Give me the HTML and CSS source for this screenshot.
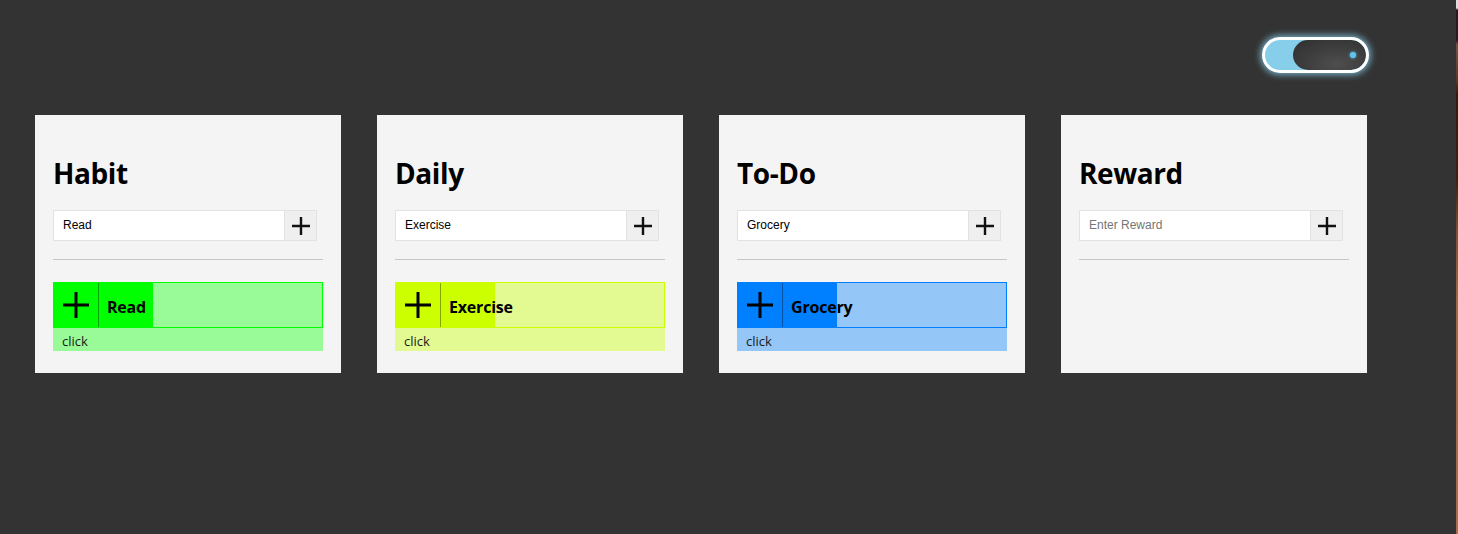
FILE: index.html
```html
<!DOCTYPE html>
<html lang="en">
<head>
<meta charset="utf-8">
<title>Habits</title>
<link rel="stylesheet" href="styles.css">
</head>
<body>
<div class="page">
  <header class="topbar">
    <div class="toggle">
      <div class="knob"><span class="dot"></span></div>
    </div>
  </header>
  <main class="board">
    <section class="card">
      <h2 class="card-title">Habit</h2>
      <div class="add-row">
        <input class="add-input" type="text" value="Read" placeholder="Enter Habit">
        <button class="add-btn"><svg width="20" height="20" viewBox="0 0 20 20"><path d="M10 1v18M1 10h18" stroke="#111" stroke-width="2.4"/></svg></button>
      </div>
      <hr class="divider">
      <div class="task task-habit">
        <div class="task-row">
          <div class="task-plus"><svg width="28" height="28" viewBox="0 0 28 28"><path d="M14 1v26M1 14h26" stroke="#000" stroke-width="3"/></svg></div>
          <div class="task-name">Read</div>
        </div>
        <div class="task-foot">click</div>
      </div>
    </section>
    <section class="card">
      <h2 class="card-title">Daily</h2>
      <div class="add-row">
        <input class="add-input" type="text" value="Exercise" placeholder="Enter Daily">
        <button class="add-btn"><svg width="20" height="20" viewBox="0 0 20 20"><path d="M10 1v18M1 10h18" stroke="#111" stroke-width="2.4"/></svg></button>
      </div>
      <hr class="divider">
      <div class="task task-daily">
        <div class="task-row">
          <div class="task-plus"><svg width="28" height="28" viewBox="0 0 28 28"><path d="M14 1v26M1 14h26" stroke="#000" stroke-width="3"/></svg></div>
          <div class="task-name">Exercise</div>
        </div>
        <div class="task-foot">click</div>
      </div>
    </section>
    <section class="card">
      <h2 class="card-title">To-Do</h2>
      <div class="add-row">
        <input class="add-input" type="text" value="Grocery" placeholder="Enter To-Do">
        <button class="add-btn"><svg width="20" height="20" viewBox="0 0 20 20"><path d="M10 1v18M1 10h18" stroke="#111" stroke-width="2.4"/></svg></button>
      </div>
      <hr class="divider">
      <div class="task task-todo">
        <div class="task-row">
          <div class="task-plus"><svg width="28" height="28" viewBox="0 0 28 28"><path d="M14 1v26M1 14h26" stroke="#000" stroke-width="3"/></svg></div>
          <div class="task-name">Grocery</div>
        </div>
        <div class="task-foot">click</div>
      </div>
    </section>
    <section class="card">
      <h2 class="card-title">Reward</h2>
      <div class="add-row">
        <input class="add-input" type="text" placeholder="Enter Reward">
        <button class="add-btn"><svg width="20" height="20" viewBox="0 0 20 20"><path d="M10 1v18M1 10h18" stroke="#111" stroke-width="2.4"/></svg></button>
      </div>
      <hr class="divider">
    </section>
  </main>
</div>
</body>
</html>
```

FILE: styles.css
```css
html {
  margin: 0;
  height: 100%;
  background: linear-gradient(180deg, #ddd 0, #ddd 8px, #2a1820 10px, #2a1820 40px, #6e5444 45px, #5a3a24 80px, #2e1c0e 95px, #3a2410 180px, #7a5030 230px, #9a6a42 300px, #a47048 534px);
}

body {
  margin: 0;
  width: 1456px;
  min-height: 534px;
  background: #333333;
  font-family: "Open Sans", "Noto Sans", sans-serif;
}

.page {
  display: flex;
  flex-direction: column;
}

.topbar {
  display: flex;
  justify-content: flex-end;
  padding: 37px 87px 0 0;
}

.toggle {
  box-sizing: border-box;
  width: 107px;
  height: 36px;
  border: 3px solid #ffffff;
  border-radius: 18px;
  background: #87ceeb;
  box-shadow: 0 0 6px 2px rgba(135, 206, 235, 0.75);
  display: flex;
  justify-content: flex-end;
  overflow: hidden;
}

.knob {
  width: 73px;
  height: 100%;
  border-radius: 15px;
  background: radial-gradient(ellipse at 60% 80%, #4e4e4e 0%, #3c3c3c 55%, #2f2f2f 100%);
  display: flex;
  align-items: center;
  justify-content: flex-end;
  padding-right: 10px;
  box-sizing: border-box;
}

.dot {
  width: 6px;
  height: 6px;
  border-radius: 50%;
  background: #5fc4ee;
  box-shadow: 0 0 3px #5fc4ee;
}

.board {
  display: flex;
  gap: 36px;
  padding: 42px 0 0 35px;
}

.card {
  box-sizing: border-box;
  width: 306px;
  height: 258px;
  background: #f4f4f4;
  padding: 0 18px;
  display: flex;
  flex-direction: column;
}

.card-title {
  margin: 39px 0 18px;
  font-size: 28px;
  line-height: 38px;
  font-weight: 700;
  letter-spacing: -0.4px;
  color: #000;
}

.add-row {
  display: flex;
  height: 31px;
}

.add-input {
  box-sizing: border-box;
  width: 232px;
  height: 31px;
  border: 1px solid #e2e2e2;
  background: #fff;
  padding: 0 9px 1px;
  font-family: "Liberation Sans", Arial, sans-serif;
  font-size: 12px;
  color: #000;
  outline: none;
}

.add-input::placeholder {
  color: #757575;
}

.add-btn {
  box-sizing: border-box;
  width: 32px;
  height: 31px;
  margin: 0;
  padding: 0;
  border: 1px solid #e2e2e2;
  border-left: none;
  background: #efefef;
  display: flex;
  align-items: center;
  justify-content: center;
}

.divider {
  width: 270px;
  margin: 18px 0 0;
  border: none;
  border-top: 1px solid #c6c6c6;
  height: 0;
}

.task {
  margin-top: 22px;
  width: 270px;
  display: flex;
  flex-direction: column;
}

.task-row {
  box-sizing: border-box;
  height: 46px;
  display: flex;
  border: 1px solid var(--main);
  background: var(--light);
}

.task-plus {
  width: 44px;
  background: var(--main);
  border-right: 1px solid rgba(0, 0, 0, 0.35);
  display: flex;
  align-items: center;
  justify-content: center;
}

.task-name {
  box-sizing: border-box;
  width: 54px;
  padding-left: 8px;
  background: var(--main);
  font-size: 16px;
  font-weight: 700;
  letter-spacing: -0.2px;
  color: #000;
  white-space: nowrap;
  display: flex;
  align-items: center;
  padding-top: 3px;
}

.task-foot {
  height: 23px;
  background: var(--light);
  padding-left: 9px;
  font-size: 13px;
  line-height: 27px;
  color: #1a1a1a;
}

.task-habit {
  --main: #00ff00;
  --light: #98fb98;
}

.task-daily {
  --main: #ccff00;
  --light: #e3fa93;
}

.task-todo {
  --main: #007fff;
  --light: #94c6f8;
}
```
